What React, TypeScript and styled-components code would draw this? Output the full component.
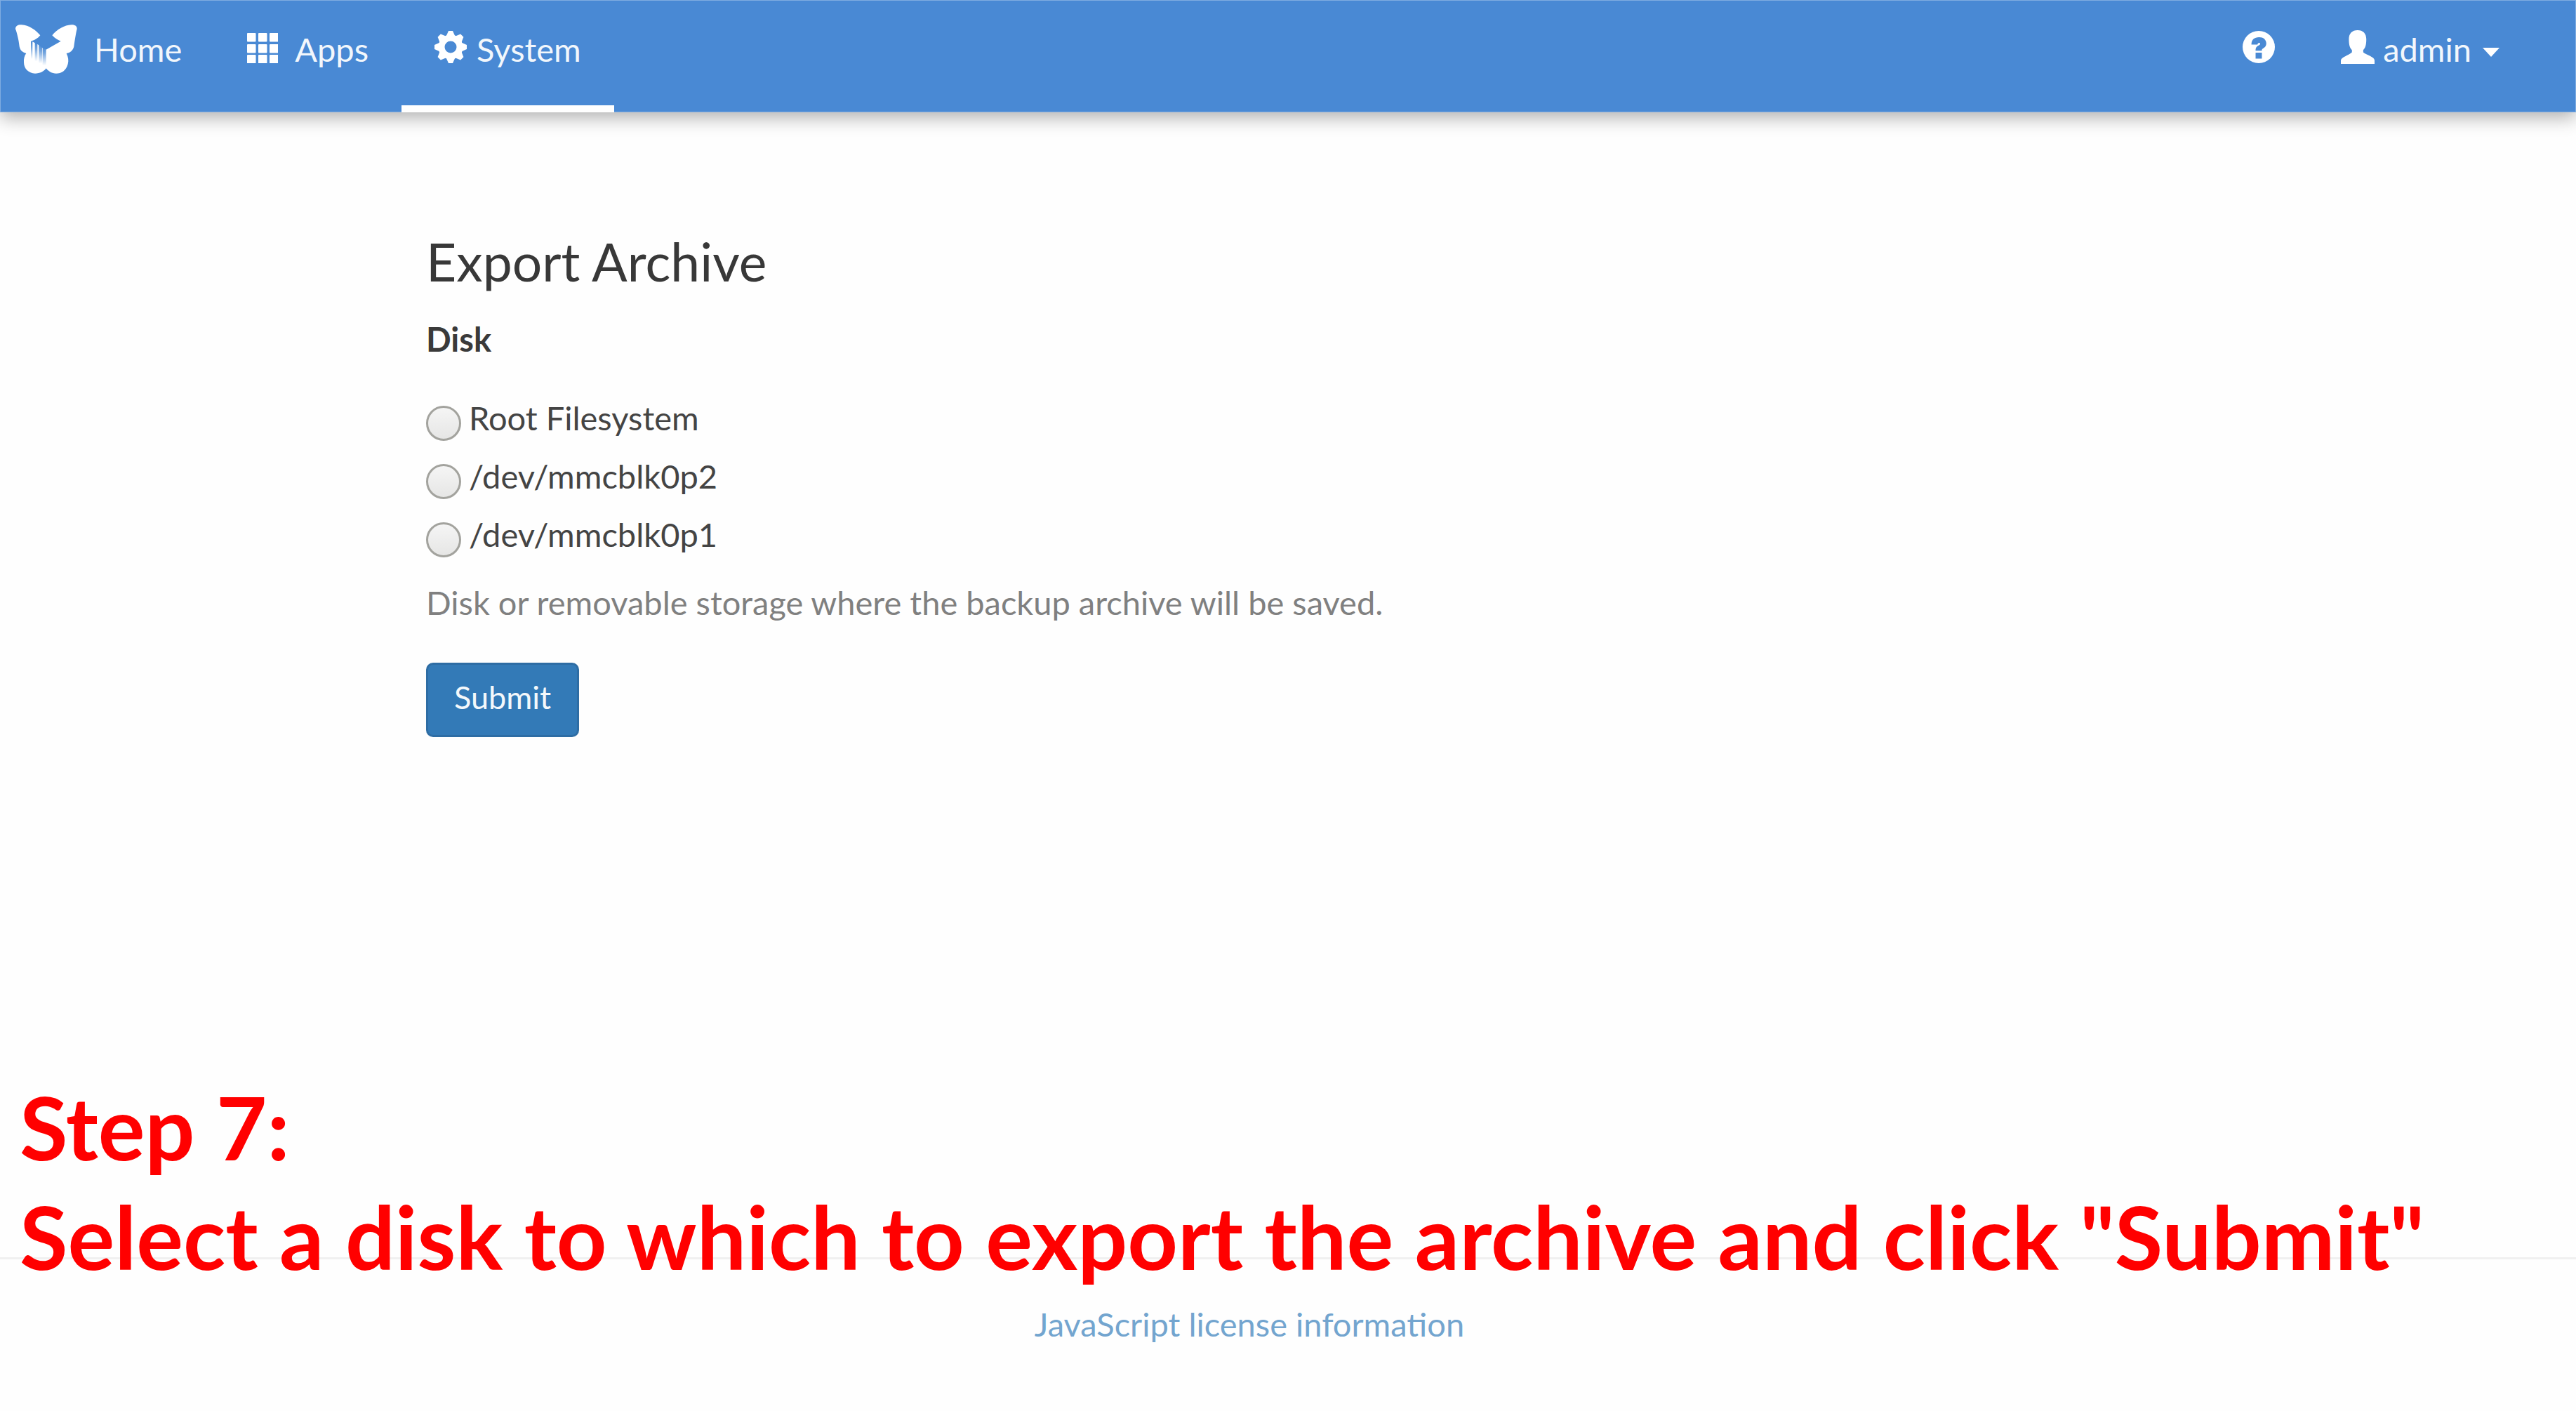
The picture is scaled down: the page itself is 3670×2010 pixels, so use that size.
import React, { useState } from "react";
import styled, { createGlobalStyle } from "styled-components";

const GlobalStyle = createGlobalStyle`
  *, *::before, *::after { box-sizing: border-box; }
  body {
    margin: 0;
    background: #fefefe;
    color: #3a3a3a;
    font-family: Lato, "Open Sans", sans-serif;
    font-size: 47px;
    line-height: 60px;
  }
`;

const Page = styled.div`
  position: relative;
  display: flex;
  flex-direction: column;
  min-height: 100vh;
`;

const Navbar = styled.nav`
  display: flex;
  justify-content: space-between;
  padding-right: 62px;
  background: #4989d4;
  box-shadow: 0 8px 24px rgba(0, 0, 0, 0.3), inset 0 0 0 1px rgba(255, 255, 255, 0.3);
`;

const NavGroup = styled.div`
  display: flex;
`;

const Brand = styled.a`
  display: flex;
  align-items: center;
  gap: 24px;
  padding: 35px 46px 55px 21px;
  color: #f2f7fc;
  text-decoration: none;
`;

const NavLink = styled.a<{ $active?: boolean; $gap?: number }>`
  display: flex;
  align-items: center;
  gap: ${(p) => p.$gap ?? 14}px;
  height: 160px;
  padding: 40px 47px 50px;
  border-bottom: 10px solid ${(p) => (p.$active ? "#fff" : "transparent")};
  color: #f2f7fc;
  text-decoration: none;
`;

const MenuButton = styled.button`
  display: flex;
  align-items: center;
  gap: 12px;
  height: 160px;
  padding: 40px 47px 60px;
  border: 0;
  background: none;
  color: #f2f7fc;
  font: inherit;
`;

const Glyph = styled.svg`
  flex: none;
  margin-bottom: 6px;
  fill: #fff;
`;

const Logo = styled.svg`
  flex: none;
  fill: #fff;
`;

const Caret = styled.span`
  margin: 9px 0 0 4px;
  border-top: 13px solid #fff;
  border-left: 12px solid transparent;
  border-right: 12px solid transparent;
`;

const Main = styled.main`
  flex: 1;
  padding: 172px 607px 0;
`;

const Title = styled.h2`
  margin: 0 0 41px;
  font-size: 75px;
  font-weight: 400;
  line-height: 80px;
  color: #383838;
`;

const Field = styled.fieldset`
  min-width: 0;
  margin: 0;
  padding: 0;
  border: 0;
`;

const Legend = styled.legend`
  margin-bottom: 52px;
  padding: 0;
  font-weight: 700;
`;

const Options = styled.div`
  display: flex;
  flex-direction: column;
  align-items: flex-start;
  gap: 19px;
`;

const Option = styled.label`
  display: flex;
  gap: 11px;
  height: 64px;
  color: #444;
`;

const Radio = styled.input`
  appearance: none;
  width: 50px;
  height: 50px;
  margin: 13px 0 0;
  border: 3px solid #a3a39e;
  border-radius: 50%;
  background: linear-gradient(#f5f5f5, #e6e6e5);

  &:checked {
    background: radial-gradient(#444 0 10px, #eee 12px);
  }
`;

const Hint = styled.p`
  margin: 33px 0 56px;
  color: #808080;
`;

const SubmitButton = styled.button`
  display: block;
  padding: 16px 37px 24px;
  border: 3px solid #2e6da4;
  border-radius: 10px;
  background: #337ab7;
  color: #f4f8fb;
  font: inherit;
  font-size: 45px;
  line-height: 60px;
`;

const Footer = styled.footer`
  padding: 62px 110px 94px 0;
  border-top: 3px solid #f0f0f0;
  text-align: center;
`;

const FooterLink = styled.a`
  color: #73a5cf;
  text-decoration: none;
`;

const Caption = styled.div`
  position: absolute;
  bottom: 171px;
  left: 28px;
  color: #f00;
  font-size: 125px;
  font-weight: 700;
  line-height: 156px;
`;

const CaptionLine = styled.p`
  margin: 0;
`;

function ButterflyLogo() {
  return (
    <Logo width="89" height="70" viewBox="63 101 267 210" aria-hidden="true">
      <defs>
        <linearGradient id="finger" x1="0" y1="0" x2="0" y2="1">
          <stop offset="0" stopColor="#4989d4" />
          <stop offset="0.35" stopColor="#4989d4" stopOpacity="0.75" />
          <stop offset="1" stopColor="#4989d4" stopOpacity="0" />
        </linearGradient>
      </defs>
      <path d="M66 120C66 106 78 101 92 102C125 104 152 124 172 147C160 162 148 166 135 172L150 180L165 188L180 200L197 208L260 172C248 167 235 160 223 147C245 120 275 104 305 102C320 101 330 108 329 120C325 135 320 165 316 195C312 212 300 222 284 224C292 240 294 255 290 270C282 300 262 310 240 310C222 310 208 302 197 288C188 302 170 310 150 310C122 308 102 290 102 262C101 248 104 235 112 224C95 220 86 210 83 195C80 165 72 135 66 120Z" />
      <g fill="url(#finger)">
        <path d="M132 172h7v76h-7z" />
        <path d="M149 176l11 6v76h-11z" />
        <path d="M166 185l14 10v72h-14z" />
        <path d="M182 196l15 12v68h-15z" />
      </g>
    </Logo>
  );
}

function GridGlyph() {
  return (
    <Glyph width="44" height="46" viewBox="0 0 44 46" aria-hidden="true">
      {[3, 19, 34].map((y) =>
        [0, 16, 32].map((x) => (
          <rect key={`${x}-${y}`} x={x} y={y} width="12.5" height="12.5" rx="1" />
        ))
      )}
    </Glyph>
  );
}

function CogGlyph() {
  return (
    <Glyph width="46" height="46" viewBox="-69 -69 138 138" aria-hidden="true">
      <circle r="39" fill="none" stroke="#fff" strokeWidth="27" />
      {[0, 45, 90, 135, 180, 225, 270, 315].map((a) => (
        <path key={a} d="M-20 -44L-9 -69H9L20 -44Z" transform={`rotate(${a})`} />
      ))}
    </Glyph>
  );
}

function HelpGlyph() {
  return (
    <Glyph width="46" height="46" viewBox="15 23 139 139" aria-hidden="true">
      <circle cx="84.5" cy="92.5" r="69.5" />
      <path
        fill="#4989d4"
        d="M53 82C53 60 66 50 86 50C104 50 117 60 117 77C117 90 109 96 100 101C98 103 98 106 98 108H71C71 94 76 90 84 86C90 82 92 80 90 76C86 72 80 75 79 82ZM71 117H98V142H71Z"
      />
    </Glyph>
  );
}

function UserGlyph() {
  return (
    <Glyph width="48" height="48" viewBox="436 22 143 143" aria-hidden="true">
      <path d="M507 22C530 22 544 36 544 60C544 85 540 98 531 106V116C545 128 579 135 579 150V165H436V150C436 138 470 128 483 116V106C474 98 470 85 470 60C470 36 484 22 507 22Z" />
    </Glyph>
  );
}

const disks = ["Root Filesystem", "/dev/mmcblk0p2", "/dev/mmcblk0p1"];

export default function App() {
  const [disk, setDisk] = useState("");

  return (
    <Page>
      <GlobalStyle />
      <Navbar>
        <NavGroup>
          <Brand href="#home">
            <ButterflyLogo />
            Home
          </Brand>
          <NavLink href="#apps" $gap={24}>
            <GridGlyph />
            Apps
          </NavLink>
          <NavLink href="#system" $active>
            <CogGlyph />
            System
          </NavLink>
        </NavGroup>
        <NavGroup>
          <NavLink href="#help" aria-label="Help">
            <HelpGlyph />
          </NavLink>
          <MenuButton type="button" aria-haspopup="menu">
            <UserGlyph />
            admin
            <Caret />
          </MenuButton>
        </NavGroup>
      </Navbar>

      <Main>
        <Title>Export Archive</Title>
        <form onSubmit={(e) => e.preventDefault()}>
          <Field>
            <Legend>Disk</Legend>
            <Options>
              {disks.map((name) => (
                <Option key={name}>
                  <Radio
                    type="radio"
                    name="disk"
                    value={name}
                    checked={disk === name}
                    onChange={() => setDisk(name)}
                  />
                  {name}
                </Option>
              ))}
            </Options>
            <Hint>Disk or removable storage where the backup archive will be saved.</Hint>
          </Field>
          <SubmitButton type="submit">Submit</SubmitButton>
        </form>
      </Main>

      <Footer>
        <FooterLink href="#jslicense">JavaScript license information</FooterLink>
      </Footer>

      <Caption>
        <CaptionLine>Step 7:</CaptionLine>
        <CaptionLine>Select a disk to which to export the archive and click "Submit"</CaptionLine>
      </Caption>
    </Page>
  );
}
